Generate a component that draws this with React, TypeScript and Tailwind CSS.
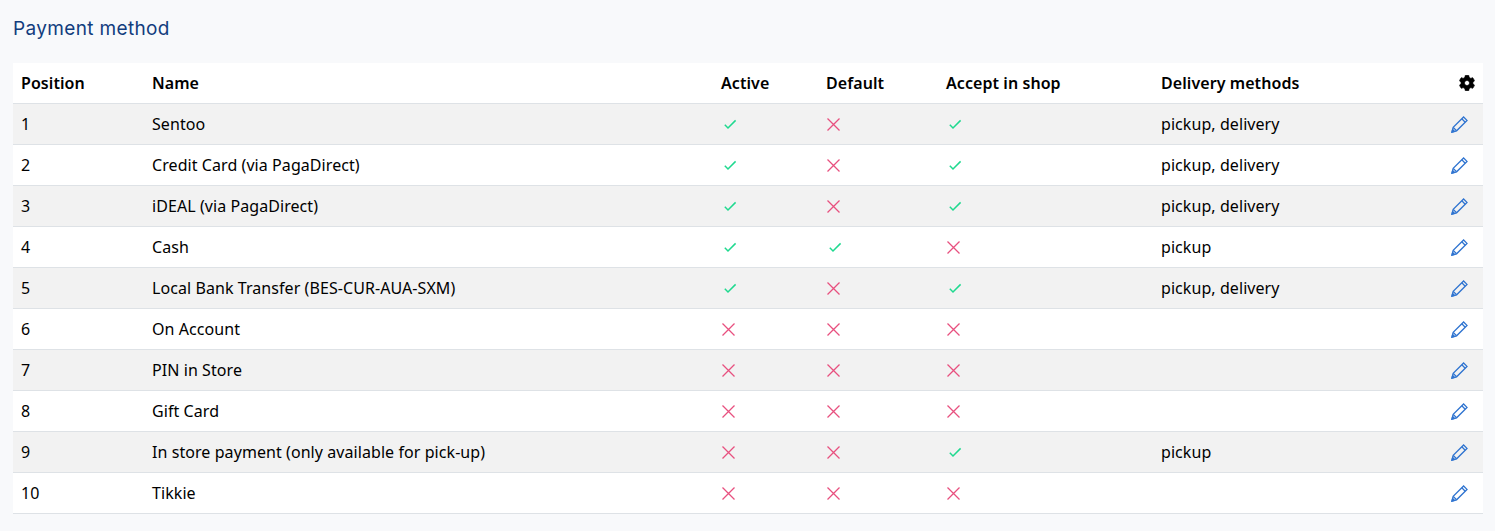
import { FaCog } from 'react-icons/fa'

const rows = [
  { name: 'Sentoo', active: true, isDefault: false, shop: true, delivery: 'pickup, delivery' },
  { name: 'Credit Card (via PagaDirect)', active: true, isDefault: false, shop: true, delivery: 'pickup, delivery' },
  { name: 'iDEAL (via PagaDirect)', active: true, isDefault: false, shop: true, delivery: 'pickup, delivery' },
  { name: 'Cash', active: true, isDefault: true, shop: false, delivery: 'pickup' },
  { name: 'Local Bank Transfer (BES-CUR-AUA-SXM)', active: true, isDefault: false, shop: true, delivery: 'pickup, delivery' },
  { name: 'On Account', active: false, isDefault: false, shop: false, delivery: '' },
  { name: 'PIN in Store', active: false, isDefault: false, shop: false, delivery: '' },
  { name: 'Gift Card', active: false, isDefault: false, shop: false, delivery: '' },
  { name: 'In store payment (only available for pick-up)', active: false, isDefault: false, shop: true, delivery: 'pickup' },
  { name: 'Tikkie', active: false, isDefault: false, shop: false, delivery: '' },
]

function Flag({ on }: { on: boolean }) {
  if (on) {
    return (
      <svg width="16" height="16" viewBox="0 -1 16 16" fill="none" className="block overflow-visible" stroke="#1fd98f" strokeWidth="1.5">
        <path d="M3.8 7.8 7 11 14.6 3.4" />
      </svg>
    )
  }
  return (
    <svg width="16" height="16" viewBox="0 -1 16 16" fill="none" className="block overflow-visible" stroke="#e8507f" strokeWidth="1.3">
      <path d="M1.5 1.5 13.5 13.5M13.5 1.5 1.5 13.5" />
    </svg>
  )
}

function Pencil() {
  return (
    <svg width="17" height="17" viewBox="0 -1 17 17" fill="none" stroke="#2f74d0" strokeWidth="1.3" className="block overflow-visible">
      <path d="M12.6 1 16 4.4 5.6 14.8 1 16 2.2 11.4 Z" />
      <path d="M10.8 2.8 14.2 6.2M2.2 11.4 5.6 14.8" />
      <path d="M1 16 1.6 13.6 3.4 15.4 Z" fill="#2f74d0" />
    </svg>
  )
}

export default function App() {
  return (
    <div className="min-h-[531px] bg-[#f8f9fb] px-[13px] pt-[17px] font-['Noto_Sans',sans-serif] text-[16px] tracking-[0.07px] text-black">
      <h1 className="mb-[22px] h-[24px] font-['Inter',sans-serif] text-[19px] leading-[24px] tracking-[0.35px] text-[#123d7e]">Payment method</h1>
      <table className="w-[1470px] table-fixed border-collapse bg-white">
        <thead>
          <tr className="h-[40px] border-b border-[#dee2e6]">
            <th className="w-[131px] px-2 text-left font-semibold">Position</th>
            <th className="w-[569px] px-2 text-left font-semibold">Name</th>
            <th className="w-[105px] px-2 text-left font-semibold">Active</th>
            <th className="w-[120px] px-2 text-left font-semibold">Default</th>
            <th className="w-[215px] px-2 text-left font-semibold">Accept in shop</th>
            <th className="px-2 text-left font-semibold">Delivery methods</th>
            <th className="w-[60px] px-2">
              <FaCog className="ml-auto block" size={16} stroke="currentColor" strokeWidth={20} />
            </th>
          </tr>
        </thead>
        <tbody>
          {rows.map((row, i) => (
            <tr key={row.name} className={`h-[41px] border-b border-[#dee2e6] ${i % 2 === 0 ? 'bg-[#f2f2f2]' : 'bg-white'}`}>
              <td className="px-2">{i + 1}</td>
              <td className="px-2">{row.name}</td>
              <td className="px-2"><Flag on={row.active} /></td>
              <td className="px-2"><Flag on={row.isDefault} /></td>
              <td className="px-2"><Flag on={row.shop} /></td>
              <td className="px-2">{row.delivery}</td>
              <td className="py-2 pr-[15px] pl-2">
                <div className="flex justify-end"><Pencil /></div>
              </td>
            </tr>
          ))}
        </tbody>
      </table>
    </div>
  )
}
